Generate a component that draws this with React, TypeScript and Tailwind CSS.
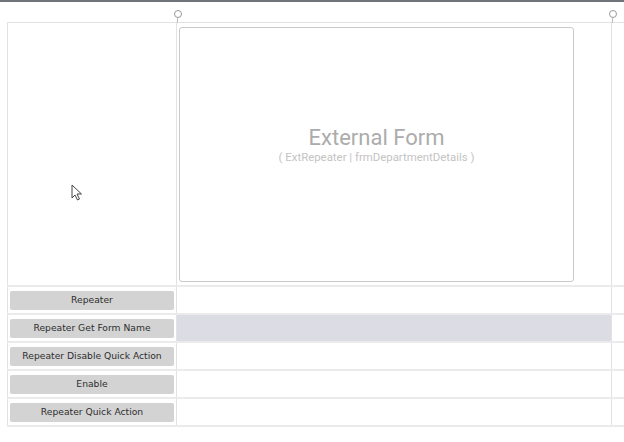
const buttons = [
  'Repeater',
  'Repeater Get Form Name',
  'Repeater Disable Quick Action',
  'Enable',
  'Repeater Quick Action',
];

const Pin = ({ left }: { left: string }) => (
  <div className={`absolute top-[10px] ${left} flex flex-col items-center -translate-x-1/2`}>
    <div className="w-[8px] h-[8px] rounded-full border border-[#9a9a9a] bg-white" />
    <div className="w-px h-[5px] bg-[#bdbdbd]" />
  </div>
);

const App = () => {
  return (
    <div className="relative w-[624px] h-[442px] bg-white overflow-hidden font-['DejaVu_Sans',sans-serif]">
      <div className="h-[2px] bg-[#6f747b]" />
      <Pin left="left-[177.5px]" />
      <Pin left="left-[612.5px]" />

      <div className="mt-[20px] ml-[7px] flex flex-col border-t border-[#e2e2e2]">
        <div className="flex h-[264px] border-b-2 border-[#ebebeb]">
          <div className="relative w-[170px] border-l border-r border-[#e2e2e2]">
            <svg className="absolute left-[63px] top-[161px]" width="12" height="17" viewBox="0 0 12 17">
              <path d="M1 1 L1 14 L4 11 L6.5 16 L8.5 15 L6 10 L10.5 10 Z" fill="white" stroke="#444" strokeWidth="1" strokeLinejoin="round" />
            </svg>
          </div>
          <div className="w-[435px] border-r border-[#e2e2e2] pt-[4px] pl-[2px] pr-[37px] pb-[3px]">
            <div className="h-full rounded-[3px] border border-[#c9c9c9] flex flex-col items-center justify-center pb-[22px] font-['Roboto',sans-serif]">
              <div className="text-[22px] leading-[27px] text-[#acacac]">External Form</div>
              <div className="text-[11.4px] leading-[13px] text-[#c4c4c4]">( ExtRepeater | frmDepartmentDetails )</div>
            </div>
          </div>
          <div className="flex-1" />
        </div>

        {buttons.map((label, i) => (
          <div key={label} className="flex h-[28px] border-b-2 border-[#ebebeb]">
            <div className="w-[170px] border-l border-r border-[#e2e2e2] flex items-center pl-[2px] pr-[2px]">
              <div className="w-[165px] h-[19px] rounded-[2px] bg-[#d3d3d3] flex items-center justify-center text-[9.2px] text-[#2e2e2e]">
                {label}
              </div>
            </div>
            <div className={`w-[435px] border-r border-[#e2e2e2] ${i === 1 ? 'bg-[#dcdde4]' : ''}`} />
            <div className="flex-1" />
          </div>
        ))}
      </div>
    </div>
  );
};

export default App;
